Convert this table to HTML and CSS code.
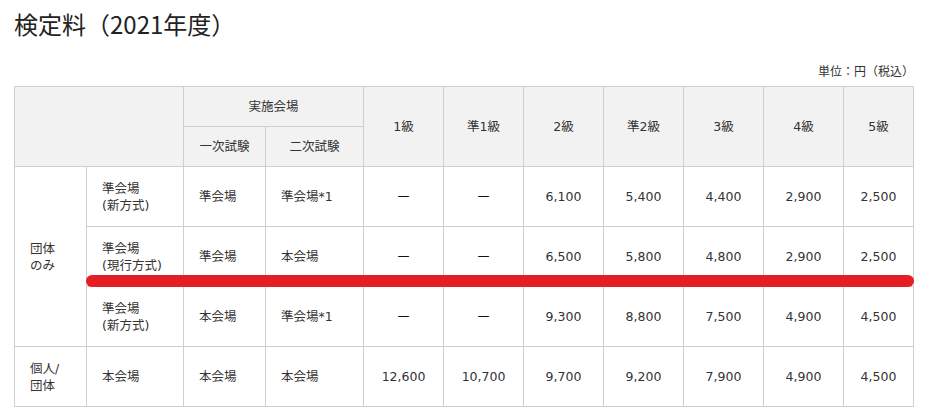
FILE: index.html
```html
<!DOCTYPE html>
<html lang="ja">
<head>
<meta charset="utf-8">
<link rel="stylesheet" href="styles.css">
</head>
<body>
<div class="page">
  <h1 class="title">検定料（2021年度）</h1>
  <p class="unit">単位：円（税込）</p>
  <div class="table-wrap">
    <table class="fees">
      <colgroup>
        <col class="c-a"><col class="c-b"><col class="c-c"><col class="c-d">
        <col class="c-g"><col class="c-g"><col class="c-g"><col class="c-g"><col class="c-g"><col class="c-g"><col class="c-last">
      </colgroup>
      <thead>
        <tr class="h1">
          <th colspan="2" rowspan="2"></th>
          <th colspan="2">実施会場</th>
          <th rowspan="2">1級</th>
          <th rowspan="2">準1級</th>
          <th rowspan="2">2級</th>
          <th rowspan="2">準2級</th>
          <th rowspan="2">3級</th>
          <th rowspan="2">4級</th>
          <th rowspan="2">5級</th>
        </tr>
        <tr class="h2">
          <th>一次試験</th>
          <th>二次試験</th>
        </tr>
      </thead>
      <tbody>
        <tr>
          <td class="l" rowspan="3">団体<br>のみ</td>
          <td class="l">準会場<br>(新方式)</td>
          <td class="l">準会場</td>
          <td class="l">準会場*1</td>
          <td class="dash">—</td><td class="dash">—</td><td>6,100</td><td>5,400</td><td>4,400</td><td>2,900</td><td>2,500</td>
        </tr>
        <tr>
          <td class="l">準会場<br>(現行方式)</td>
          <td class="l">準会場</td>
          <td class="l">本会場</td>
          <td class="dash">—</td><td class="dash">—</td><td>6,500</td><td>5,800</td><td>4,800</td><td>2,900</td><td>2,500</td>
        </tr>
        <tr>
          <td class="l">準会場<br>(新方式)</td>
          <td class="l">本会場</td>
          <td class="l">準会場*1</td>
          <td class="dash">—</td><td class="dash">—</td><td>9,300</td><td>8,800</td><td>7,500</td><td>4,900</td><td>4,500</td>
        </tr>
        <tr>
          <td class="l">個人/<br>団体</td>
          <td class="l">本会場</td>
          <td class="l">本会場</td>
          <td class="l">本会場</td>
          <td>12,600</td><td>10,700</td><td>9,700</td><td>9,200</td><td>7,900</td><td>4,900</td><td>4,500</td>
        </tr>
      </tbody>
    </table>
    <div class="strike"></div>
  </div>
</div>
</body>
</html>
```

FILE: styles.css
```css
html, body {
  margin: 0;
  padding: 0;
  background: #fff;
}

body {
  font-family: "DejaVu Sans", "Noto Sans CJK JP", sans-serif;
  color: #333;
}

.page {
  padding: 6px 14px 0 14px;
}

.title {
  margin: 0;
  font-family: "Noto Sans CJK JP", sans-serif;
  font-size: 24px;
  font-weight: normal;
  line-height: 36px;
  color: #222;
}

.unit {
  margin: 20px 0 0 0;
  width: 900px;
  text-align: right;
  font-family: "Noto Sans CJK JP", sans-serif;
  font-size: 12px;
  line-height: 18px;
  color: #333;
}

.table-wrap {
  position: relative;
  margin-top: 6px;
  width: 900px;
}

.fees {
  border-collapse: collapse;
  table-layout: fixed;
  width: 900px;
  font-size: 12.5px;
  line-height: 17px;
}

.c-a { width: 72px; }
.c-b { width: 97px; }
.c-c { width: 82px; }
.c-d { width: 98px; }
.c-g { width: 80px; }
.c-last { width: 70px; }

.fees th,
.fees td {
  border: 1px solid #cfcfcf;
  text-align: center;
  vertical-align: middle;
  padding: 0;
  font-weight: normal;
}

.fees th {
  background: #f2f2f2;
}

.fees thead tr {
  height: 40px;
}

.fees tbody tr {
  height: 60px;
}

.fees td.l {
  text-align: left;
  padding-left: 15px;
}

.fees td.dash {
  font-family: "DejaVu Sans", sans-serif;
  font-size: 12px;
  color: #111;
}

.strike {
  position: absolute;
  left: 72px;
  top: 189px;
  width: 828px;
  height: 12px;
  border-radius: 6px;
  background: #e41e22;
}
```
